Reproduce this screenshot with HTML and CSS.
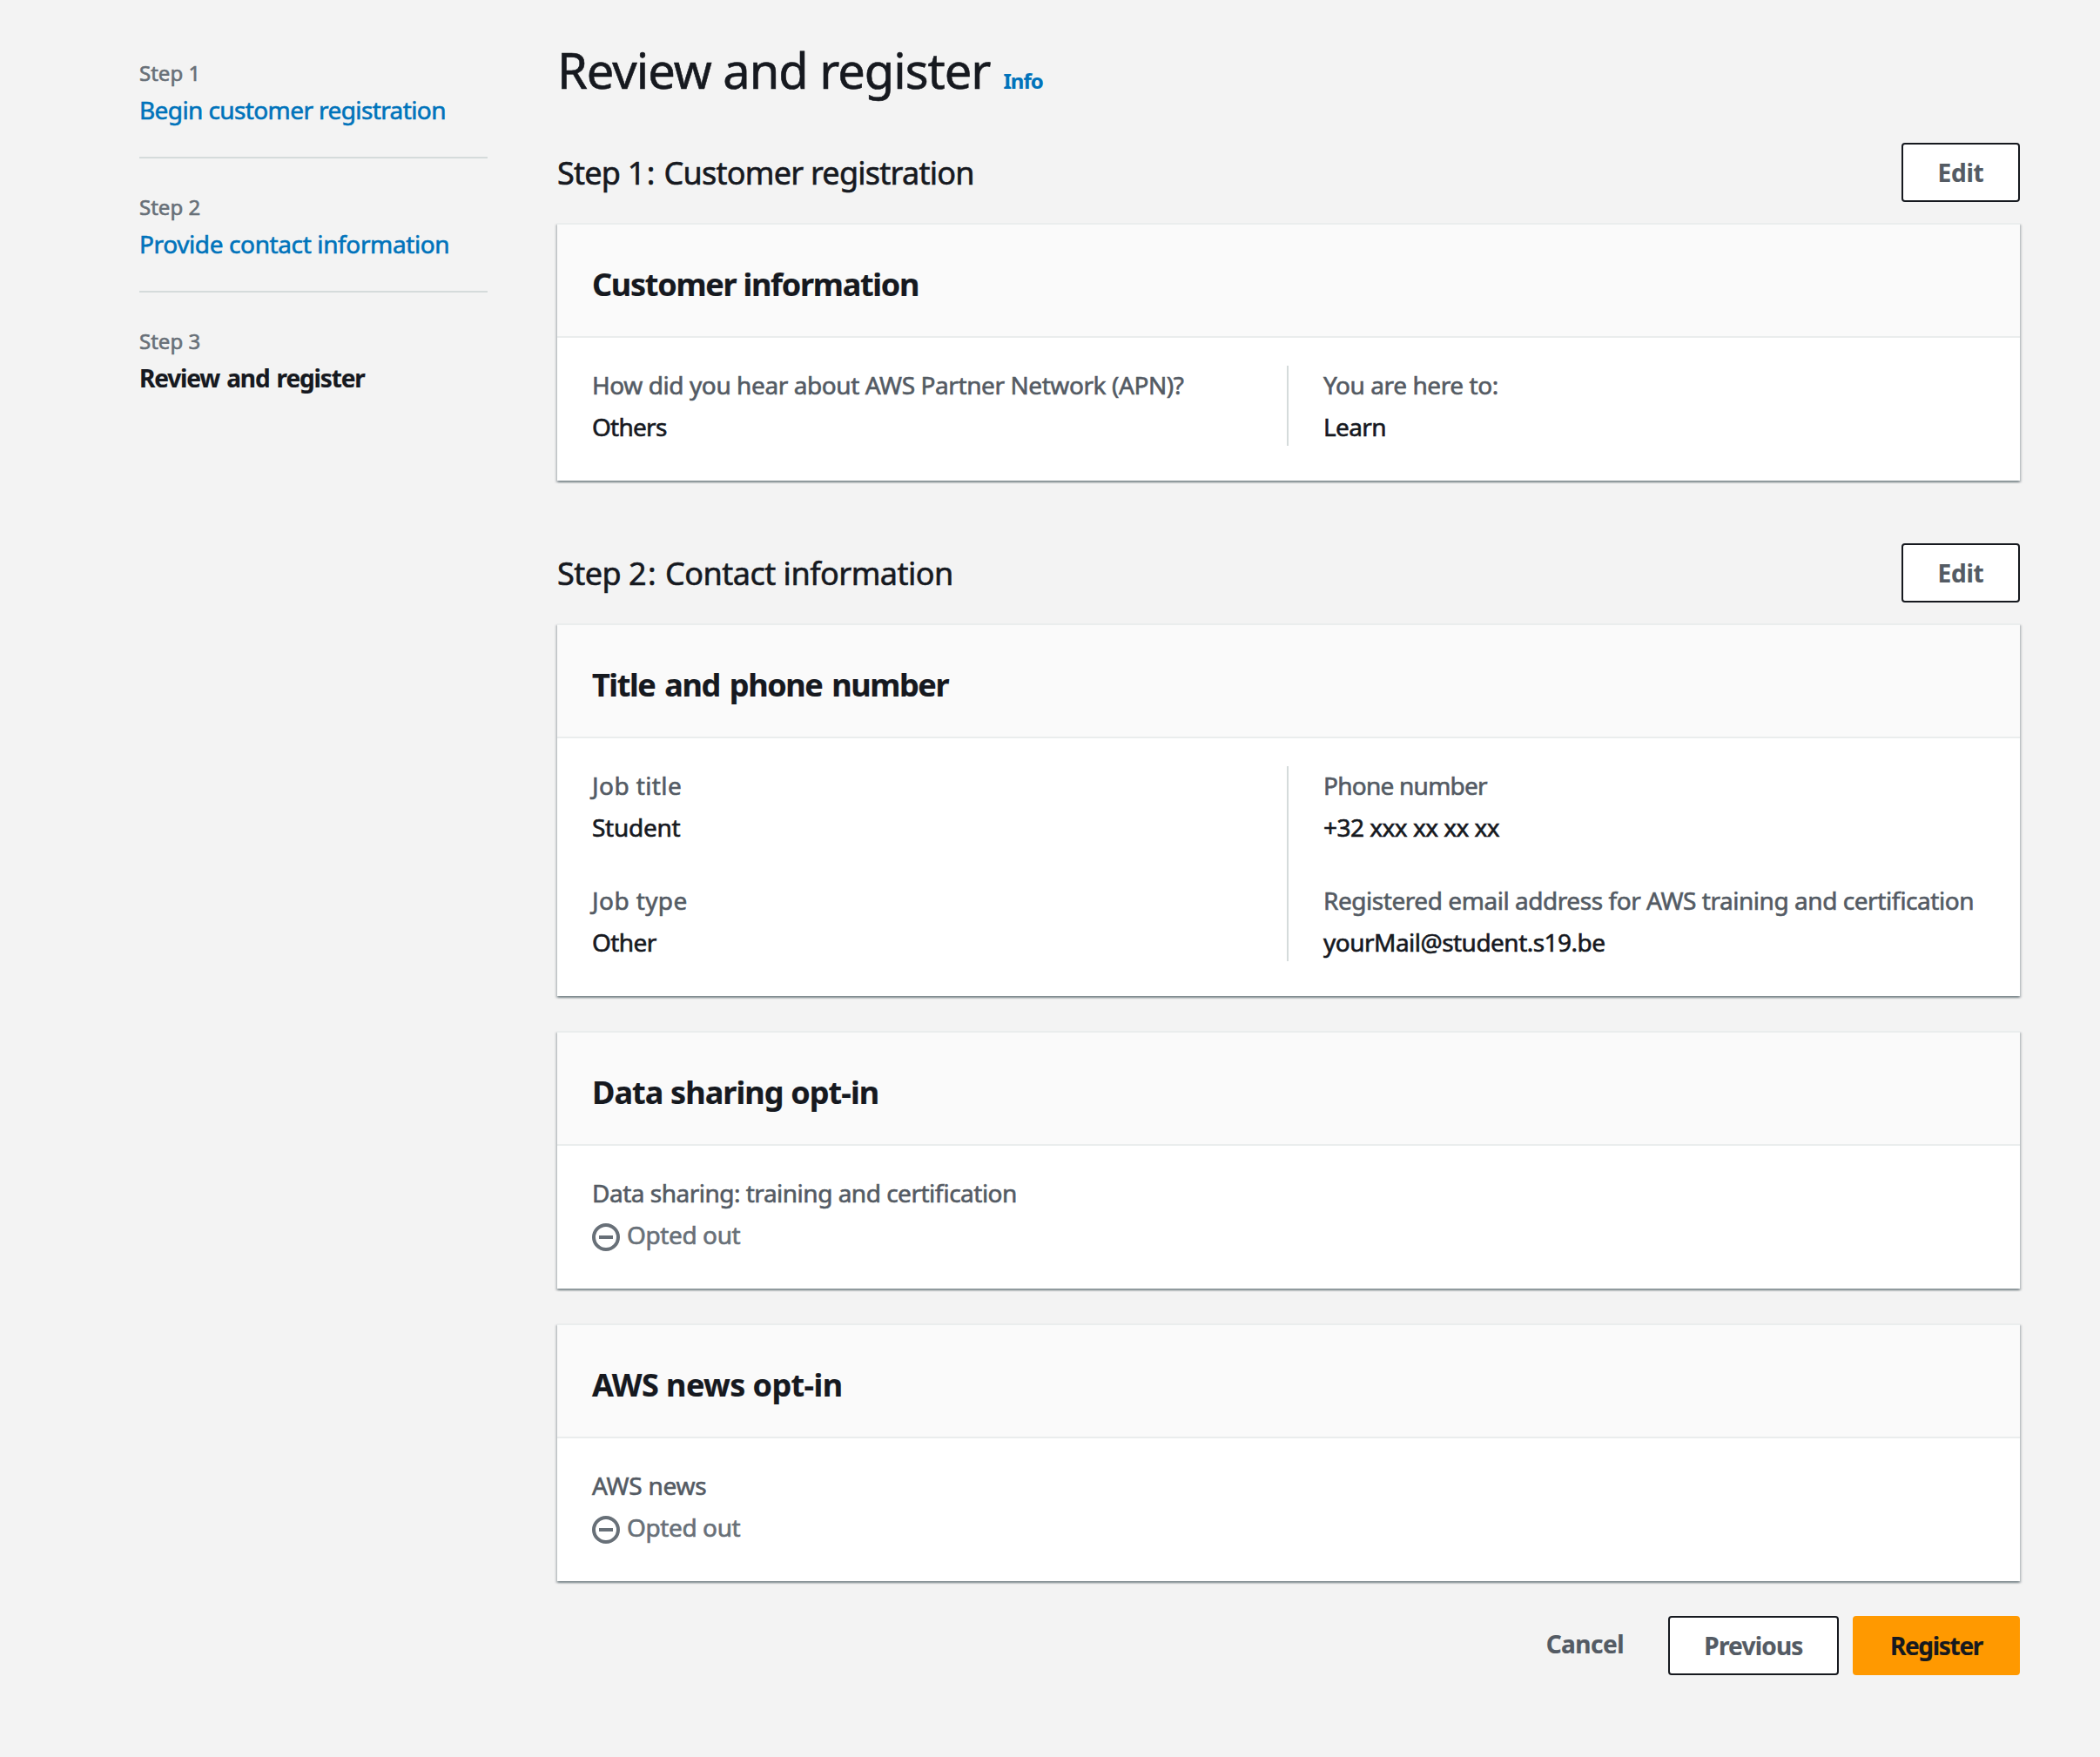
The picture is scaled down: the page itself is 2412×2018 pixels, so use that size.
FILE: index.html
```html
<!DOCTYPE html>
<html lang="en">
<head>
<meta charset="utf-8">
<title>Review and register</title>
<link rel="stylesheet" href="styles.css">
</head>
<body>
<div class="page">
  <nav class="steps">
    <div class="step"><div class="step-label">Step 1</div><a class="step-link tight-60">Begin customer registration</a></div>
    <div class="step"><div class="step-label">Step 2</div><a class="step-link tight-38">Provide contact information</a></div>
    <div class="step"><div class="step-label">Step 3</div><div class="step-current">Review and register</div></div>
  </nav>
  <main class="content">
    <header class="title-row"><h1 class="title">Review and register</h1><a class="info">Info</a></header>
    <section class="section">
      <div class="section-head"><h2 class="section-title tight-75">Step <span class="numeral">1:</span> Customer registration</h2><button class="btn btn-edit">Edit</button></div>
      <div class="card">
        <div class="card-head"><h3 class="card-title tight-126">Customer information</h3></div>
        <div class="card-body">
          <div class="col"><div class="pair"><div class="label">How did you hear about AWS Partner Network (APN)?</div><div class="value tight-75">Others</div></div></div>
          <div class="col"><div class="pair"><div class="label">You are here to:</div><div class="value tight-60">Learn</div></div></div>
        </div>
      </div>
    </section>
    <section class="section">
      <div class="section-head"><h2 class="section-title tight-50">Step <span class="numeral">2:</span> Contact information</h2><button class="btn btn-edit">Edit</button></div>
      <div class="card">
        <div class="card-head"><h3 class="card-title wide-words">Title and phone number</h3></div>
        <div class="card-body">
          <div class="col">
            <div class="pair"><div class="label loose-40">Job title</div><div class="value tight-25">Student</div></div>
            <div class="pair"><div class="label loose-40">Job type</div><div class="value tight-60">Other</div></div>
          </div>
          <div class="col">
            <div class="pair"><div class="label tight-75">Phone number</div><div class="value">+32 xxx xx xx xx</div></div>
            <div class="pair"><div class="label tight-45">Registered email address for AWS training and certification</div><div class="value">yourMail@student.s19.be</div></div>
          </div>
        </div>
      </div>
      <div class="card">
        <div class="card-head"><h3 class="card-title tight-90">Data sharing opt-in</h3></div>
        <div class="card-body"><div class="pair"><div class="label tight-50">Data sharing: training and certification</div>
          <div class="status"><svg class="status-icon" viewBox="0 0 16 16"><circle cx="8" cy="8" r="7"/><path d="M4 8h8"/></svg><span>Opted out</span></div></div></div>
      </div>
      <div class="card">
        <div class="card-head"><h3 class="card-title tight-60">AWS news opt-in</h3></div>
        <div class="card-body"><div class="pair"><div class="label tight-25">AWS news</div>
          <div class="status"><svg class="status-icon" viewBox="0 0 16 16"><circle cx="8" cy="8" r="7"/><path d="M4 8h8"/></svg><span>Opted out</span></div></div></div>
      </div>
    </section>
    <footer class="actions"><button class="btn-link">Cancel</button><button class="btn btn-previous">Previous</button><button class="btn btn-primary">Register</button></footer>
  </main>
</div>
</body>
</html>
```
FILE: styles.css
```css
* { box-sizing: border-box; }
body {
  margin: 0;
  background: #f3f3f3;
  color: #16191f;
  font: 28px/44px "Noto Sans", sans-serif;
  font-feature-settings: "liga" 1;
  -webkit-text-stroke: 0.6px currentColor;
}
h1, h2, h3 { margin: 0; }

.page { display: grid; grid-template-columns: 400px 1680px; gap: 80px; padding: 43px 0 0 160px; }

/* Wizard steps */
.steps { padding-top: 25px; }
.step { padding-bottom: 32px; margin-bottom: 40px; border-bottom: 2px solid #d5dbdb; }
.step:last-child { border: 0; }
.step-label { font-size: 24px; line-height: 32px; margin-bottom: 4px; color: #687078; }
.step-link { display: block; color: #0073bb; }
.step-current { font-weight: 700; letter-spacing: -1.15px; word-spacing: 2px; }

/* Headings */
.title-row { display: flex; align-items: baseline; gap: 15px; height: 71px; margin: 1px 0 49px; }
.title { font-size: 56px; line-height: 72px; font-weight: 400; letter-spacing: -1px; }
.info { font-size: 24px; font-weight: 700; letter-spacing: -1px; color: #0073bb; }
.section { margin-bottom: 72px; }
.section:last-of-type { margin-bottom: 40px; }
.section-head { display: flex; justify-content: space-between; align-items: center; height: 68px; margin-bottom: 24px; }
.section-title { padding-top: 2px; font-size: 36px; font-weight: 400; }
.numeral { letter-spacing: 1.4px; }

/* Buttons */
.btn { height: 68px; padding: 0; border: 2px solid #16191f; border-radius: 4px; background: #fff; color: #545b64; font: inherit; font-weight: 700; }
.btn-edit { width: 136px; letter-spacing: -0.25px; }
.btn-previous { width: 196px; letter-spacing: -0.79px; }
.btn-primary { width: 192px; background: #f90; border-color: #f90; color: #16191f; letter-spacing: -1.3px; }
.btn-link { height: 64px; margin-right: 29px; border: 0; background: none; color: #545b64; font: inherit; font-weight: 700; letter-spacing: -0.52px; }
.btn, .btn-link, .info, .step-current, .card-title { -webkit-text-stroke-width: 0.2px; }

/* Cards */
.card {
  border-top: 2px solid #eaeded;
  background: #fff;
  box-shadow: 0 2px 2px 0 rgba(0, 28, 36, .3), 2px 2px 2px 0 rgba(0, 28, 36, .15), -2px 2px 2px 0 rgba(0, 28, 36, .15);
}
.card + .card { margin-top: 40px; }
.card-head { padding: 47px 40px 37px; background: #fafafa; border-bottom: 2px solid #eaeded; }
.card-title { font-size: 36px; font-weight: 700; letter-spacing: -1.04px; }
.card-body { display: flex; padding: 32px 40px 40px; }
.col { width: 798px; }
.col + .col { border-left: 2px solid #d5dbdb; padding-left: 40px; width: 802px; white-space: nowrap; }
.pair + .pair { margin-top: 40px; }
.label { color: #545b64; margin-bottom: 4px; letter-spacing: -0.42px; }
.value { letter-spacing: -0.52px; }
.status { display: flex; align-items: center; gap: 8px; color: #687078; letter-spacing: -0.4px; }
.status-icon { width: 32px; height: 32px; margin-top: 6px; fill: none; stroke: currentColor; stroke-width: 2; }

.actions { display: flex; justify-content: flex-end; gap: 16px; }

/* Tracking */
.loose-40 { letter-spacing: 0.4px; }
.tight-25 { letter-spacing: -0.25px; }
.tight-38 { letter-spacing: -0.38px; }
.tight-45 { letter-spacing: -0.45px; }
.tight-50 { letter-spacing: -0.5px; }
.tight-60 { letter-spacing: -0.6px; }
.tight-75 { letter-spacing: -0.75px; }
.tight-90 { letter-spacing: -0.9px; }
.tight-126 { letter-spacing: -1.26px; }
.wide-words { letter-spacing: -1.4px; word-spacing: 3px; }
```
